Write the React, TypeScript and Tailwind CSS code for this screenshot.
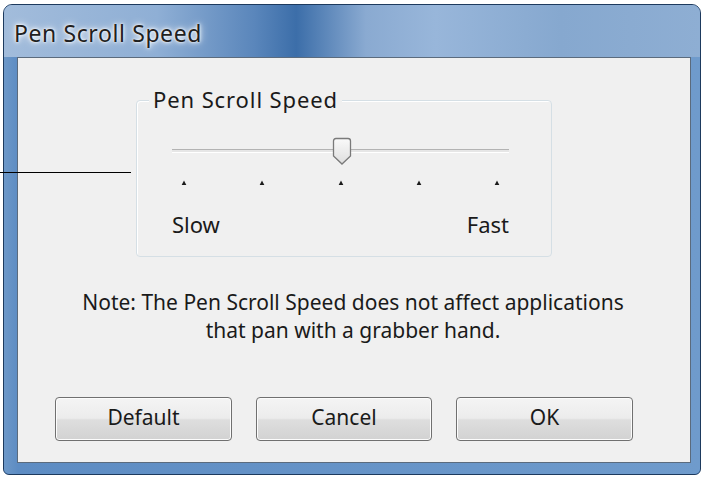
import React from "react";

const font = { fontFamily: '"Noto Sans", "Open Sans", sans-serif' };

function Button({ label, w }: { label: string; w: string }) {
  return (
    <div
      className={`${w} h-[44px] rounded-[4px] border border-[#707070] bg-[linear-gradient(180deg,#f4f4f4_0%,#ececec_48%,#dedede_52%,#d2d2d2_100%)] shadow-[inset_0_0_0_1px_#fcfcfc] flex items-center justify-center text-[21px] text-[#1a1a1a] pb-[2px]`}
    >
      {label}
    </div>
  );
}

function Tick() {
  return (
    <svg width="6" height="6" viewBox="0 0 6 6">
      <path d="M3 0.5 L5.3 5 L0.7 5 Z" fill="#1a1a1a" />
    </svg>
  );
}

export default function App() {
  return (
    <div className="relative w-[704px] h-[479px] bg-white overflow-hidden" style={font}>
      <div className="pt-[4px] pl-[3px]">
        <div className="w-[698px] h-[471px] rounded-t-[9px] rounded-b-[6px] border border-[#1d3a5e] bg-[linear-gradient(180deg,#7fa3cf_0%,#7a9fcc_30%,#5f8cc2_60%,#2460a8_100%)] flex flex-col overflow-hidden">
          <div className="h-[52px] shrink-0 flex items-center pl-[10px] pt-[4px] bg-[linear-gradient(90deg,#a2bcdb_0%,#8fafd5_22%,#5a86bb_36%,#3c6ea9_42%,#8aaad1_52%,#98b6da_62%,#86a8cf_80%,#8eaed3_100%)]">
            <span className="text-[23px] text-[#202020] tracking-[0.6px] [text-shadow:0_0_8px_#ffffff,0_0_4px_#ffffff,0_0_2px_#ffffff]">
              Pen Scroll Speed
            </span>
          </div>
          <div className="flex-1 flex px-[13px] pr-[9px] pb-[11px] bg-[linear-gradient(90deg,#6d98c8_0%,#5d8cc3_2%,#6f9bcc_100%)]">
            <div className="flex-1 bg-[#f0f0f0] border border-[#5b6b7d] flex flex-col">
              <div className="ml-[118px] mt-[42px] w-[416px] h-[157px] relative rounded-[4px] border border-[#d5dfe5] shadow-[inset_1px_1px_0_#ffffff]">
                <span className="absolute left-[12px] top-[-16px] px-[4px] bg-[#f0f0f0] text-[22px] tracking-[0.9px] text-[#1a1a1a] leading-[28px]">
                  Pen Scroll Speed
                </span>
                <div className="ml-[35px] mt-[35px] w-[337px] relative">
                  <div className="h-[30px] flex items-center">
                    <div className="w-full h-[4px] border-t border-[#b3b3b3] border-b border-b-white bg-[#e6e6e6]" />
                  </div>
                  <svg
                    className="absolute left-[160px] top-[1px]"
                    width="20"
                    height="29"
                    viewBox="0 0 20 29"
                  >
                    <defs>
                      <linearGradient id="tg" x1="0" y1="0" x2="0" y2="1">
                        <stop offset="0" stopColor="#fafafa" />
                        <stop offset="1" stopColor="#dedede" />
                      </linearGradient>
                    </defs>
                    <path
                      d="M4 1.5 H16 Q18.5 1.5 18.5 4 V19 L10 27 L1.5 19 V4 Q1.5 1.5 4 1.5 Z"
                      fill="url(#tg)"
                      stroke="#7a7a7a"
                      strokeWidth="1.3"
                    />
                  </svg>
                  <div className="flex justify-between px-[9px] mt-[14px]">
                    <Tick />
                    <Tick />
                    <Tick />
                    <Tick />
                    <Tick />
                  </div>
                  <div className="flex justify-between mt-[24px] text-[22px] text-[#1a1a1a] leading-[28px]">
                    <span>Slow</span>
                    <span>Fast</span>
                  </div>
                </div>
              </div>
              <div className="mt-[31px] text-center text-[21px] leading-[28px] text-[#1a1a1a] pr-[2px]">
                <div>Note: The Pen Scroll Speed does not affect applications</div>
                <div>that pan with a grabber hand.</div>
              </div>
              <div className="mt-[53px] ml-[37px] flex gap-[24px]">
                <Button label="Default" w="w-[177px]" />
                <Button label="Cancel" w="w-[176px]" />
                <Button label="OK" w="w-[177px]" />
              </div>
            </div>
          </div>
        </div>
      </div>
      <div className="absolute left-0 top-[172px] w-[131px] h-[1px] bg-black" />
    </div>
  );
}
